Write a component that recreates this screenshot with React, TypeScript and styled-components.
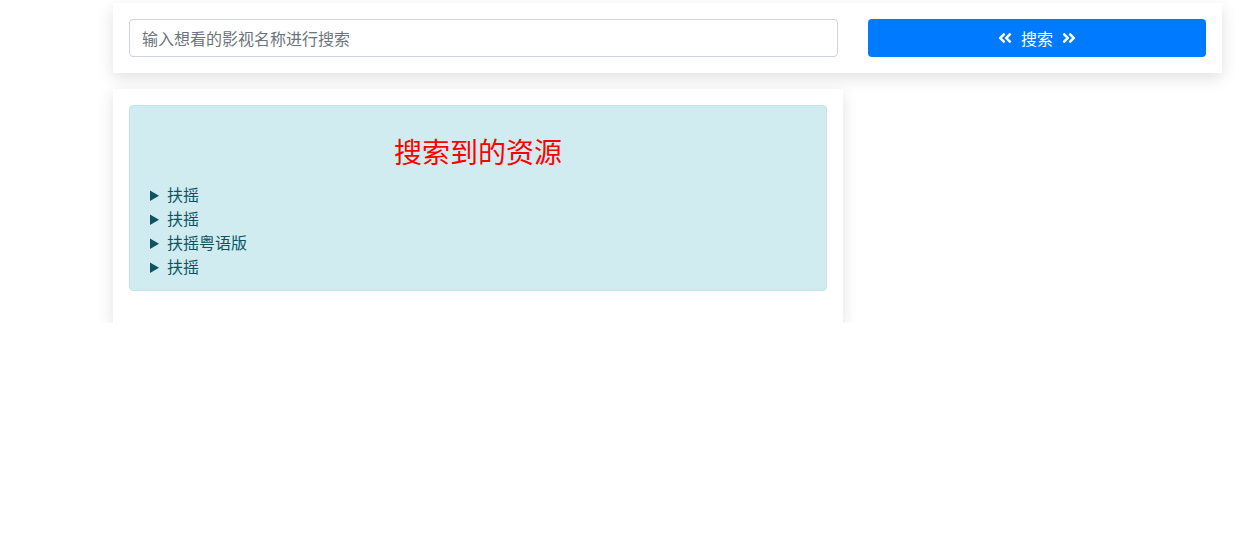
import React from 'react';
import styled, { createGlobalStyle } from 'styled-components';
import { FaAngleDoubleLeft, FaAngleDoubleRight } from 'react-icons/fa';

const GlobalStyle = createGlobalStyle`
  body {
    margin: 0;
    background: #fff;
    font-family: "Noto Sans CJK SC", "Noto Sans", "Liberation Sans", sans-serif;
    font-size: 16px;
    color: #212529;
  }
`;

const Page = styled.div`
  padding: 3px 17px 0 113px;
  display: flex;
  flex-direction: column;
  align-items: flex-start;
  gap: 16px;
`;

const Card = styled.div<{ $width: number }>`
  box-sizing: border-box;
  width: ${p => p.$width}px;
  background: #fff;
  padding: 16px;
  box-shadow: 0 5px 15px rgba(0, 0, 0, 0.12);
`;

const SearchBar = styled.form`
  display: flex;
  align-items: center;
  gap: 30px;
  margin: 0;
`;

const SearchInput = styled.input`
  box-sizing: border-box;
  flex: 0 0 709px;
  height: 38px;
  padding: 6px 12px;
  font-family: inherit;
  font-size: 16px;
  color: #495057;
  border: 1px solid #ced4da;
  border-radius: 4px;
  outline: none;
  &::placeholder {
    color: #6c757d;
  }
`;

const SearchButton = styled.button`
  box-sizing: border-box;
  flex: 1;
  height: 38px;
  display: flex;
  align-items: center;
  justify-content: center;
  gap: 8px;
  border: none;
  border-radius: 4px;
  background: #007bff;
  color: #fff;
  font-family: inherit;
  font-size: 16px;
  cursor: pointer;
  svg {
    width: 16px;
    height: 16px;
  }
`;

const Alert = styled.div`
  box-sizing: border-box;
  padding: 12px 20px 12px;
  margin-bottom: 16px;
  background: #d1ecf1;
  border: 1px solid #bee5eb;
  border-radius: 4px;
  color: #0c5460;
`;

const Title = styled.h3`
  margin: 16px 0 14px;
  text-align: center;
  color: #f00;
  font-size: 28px;
  font-weight: 400;
  line-height: 34px;
`;

const Item = styled.details`
  line-height: 24px;
  summary {
    cursor: pointer;
  }
`;

const results = ['扶摇', '扶摇', '扶摇粤语版', '扶摇'];

export default function App(): JSX.Element {
  return (
    <>
      <GlobalStyle />
      <Page>
        <Card $width={1109}>
          <SearchBar onSubmit={e => e.preventDefault()}>
            <SearchInput placeholder="输入想看的影视名称进行搜索" />
            <SearchButton type="submit">
              <FaAngleDoubleLeft />
              搜索
              <FaAngleDoubleRight />
            </SearchButton>
          </SearchBar>
        </Card>
        <Card $width={730}>
          <Alert>
            <Title>搜索到的资源</Title>
            {results.map((name, i) => (
              <Item key={i}>
                <summary>{name}</summary>
              </Item>
            ))}
          </Alert>
        </Card>
      </Page>
    </>
  );
}
